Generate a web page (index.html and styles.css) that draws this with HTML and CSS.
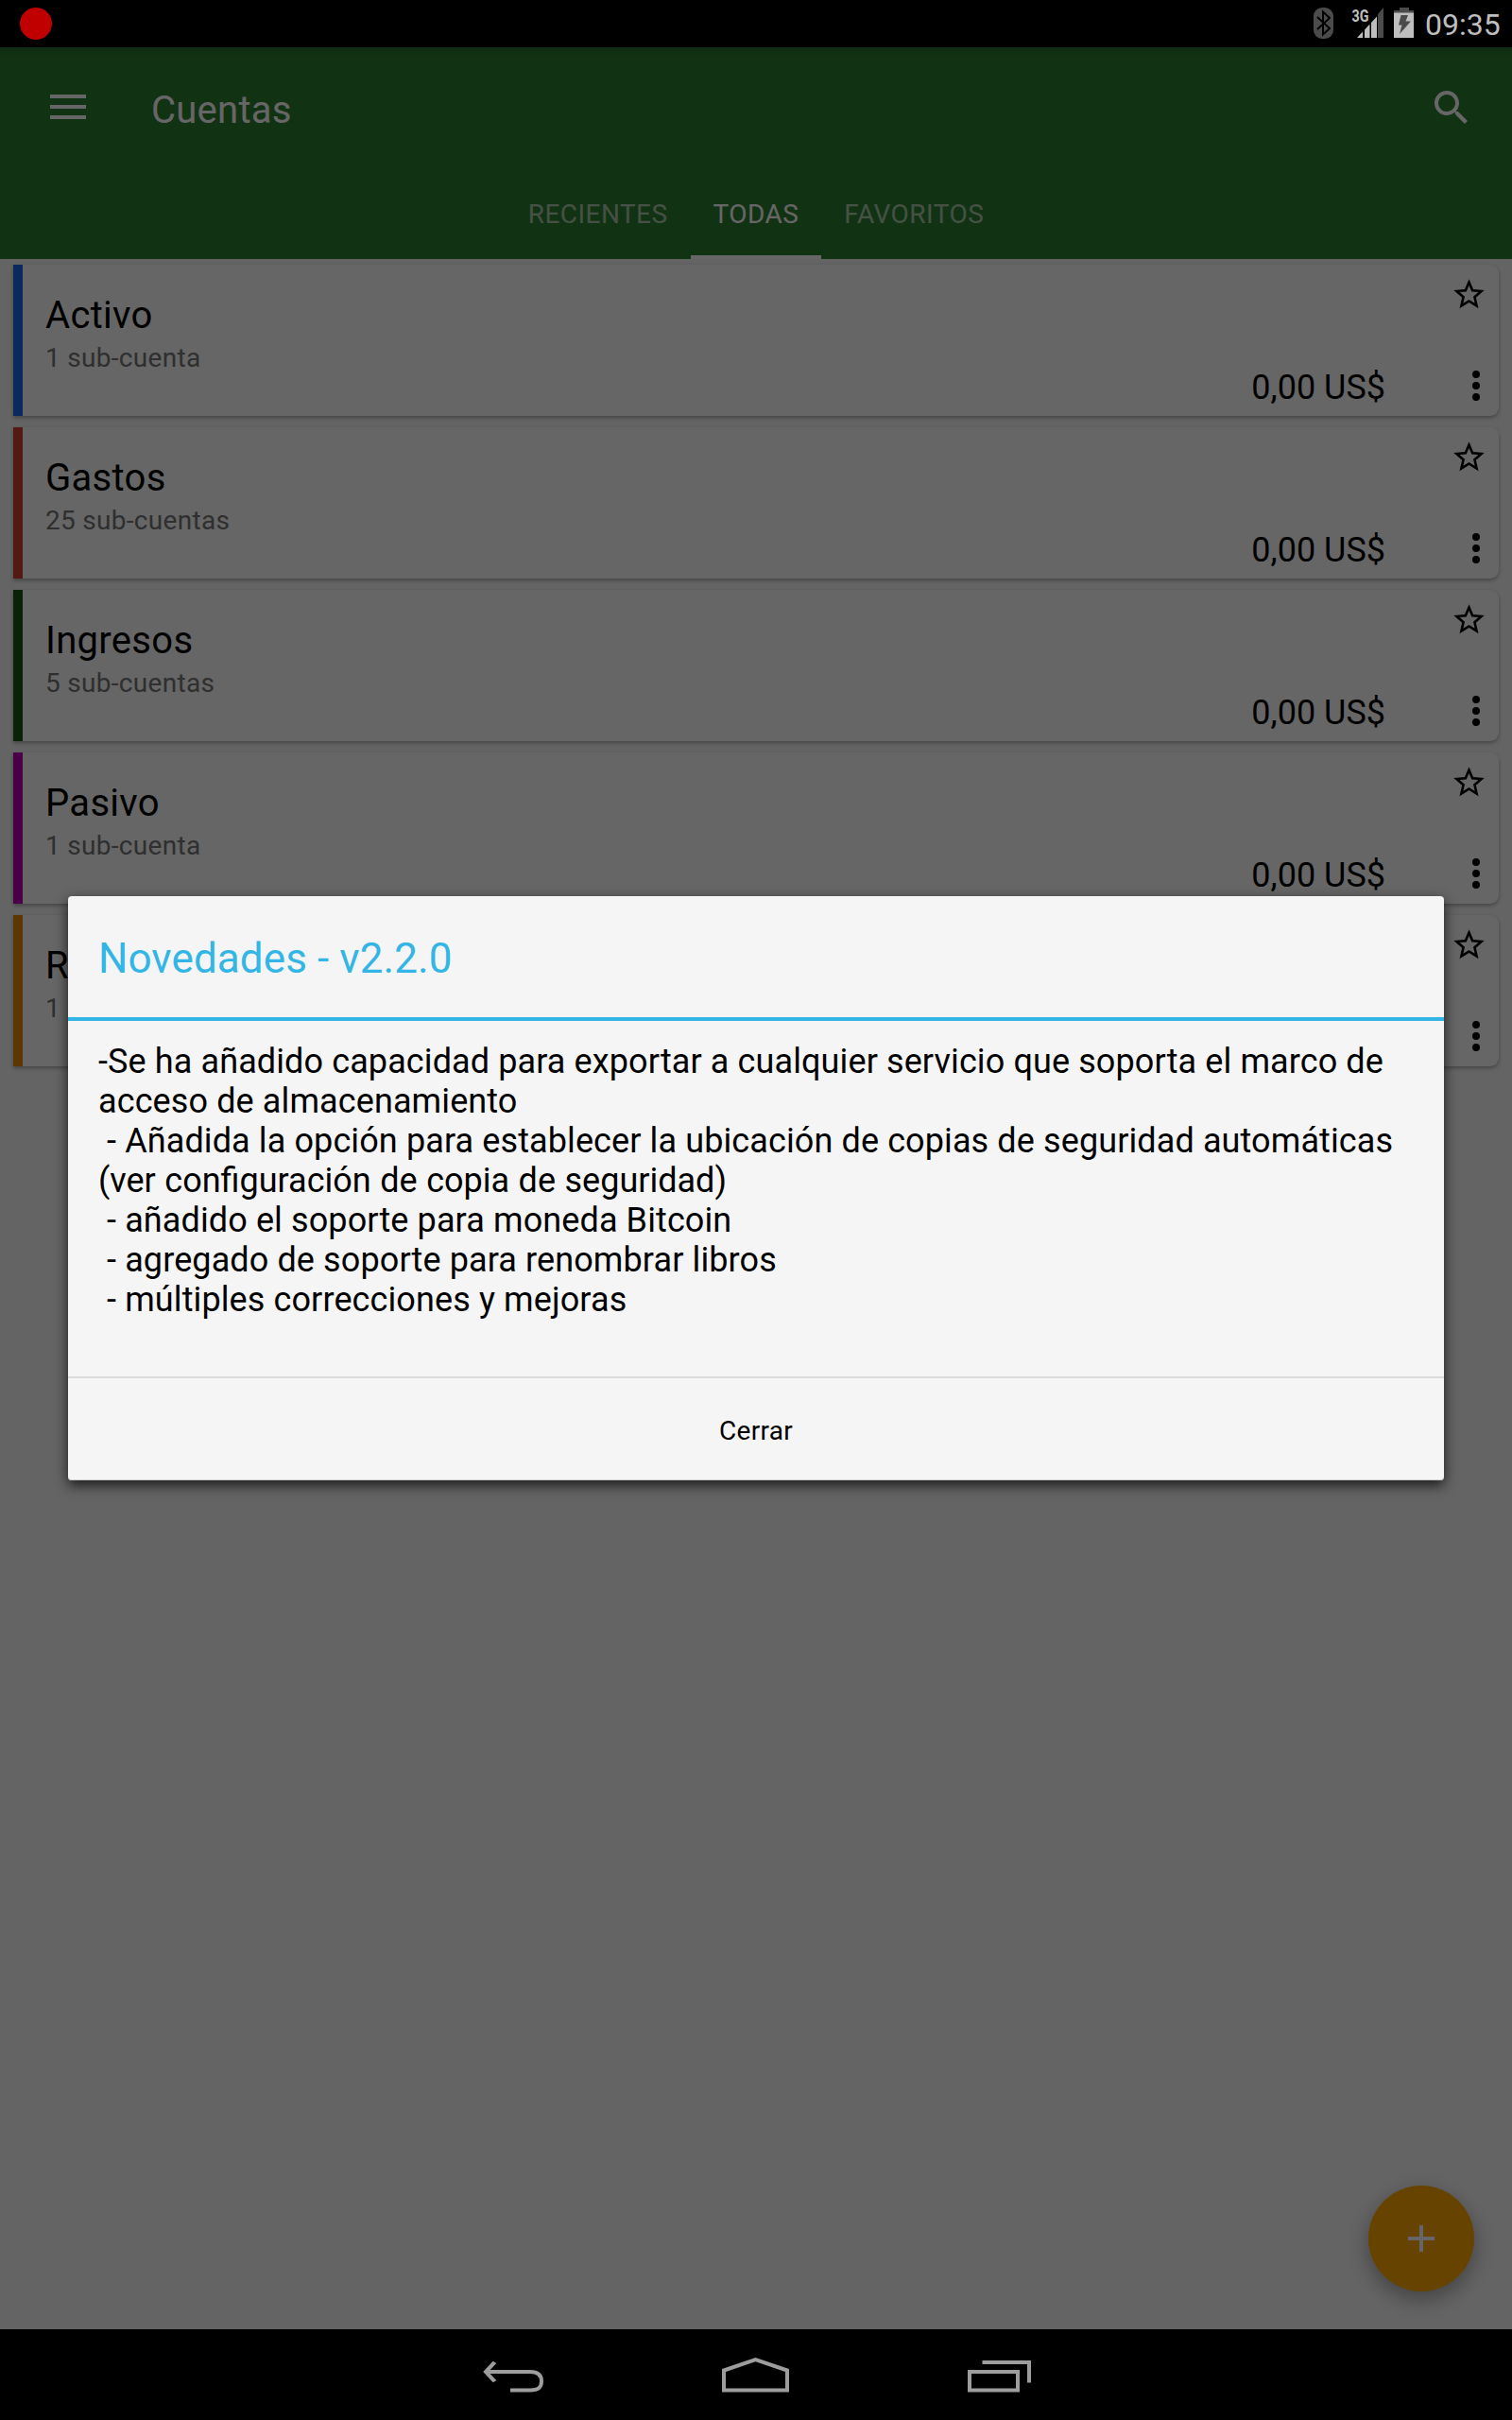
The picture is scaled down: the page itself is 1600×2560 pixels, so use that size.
FILE: index.html
```html
<!DOCTYPE html>
<html lang="es">
<head>
<meta charset="utf-8">
<title>Cuentas</title>
<link rel="stylesheet" href="styles.css">
</head>
<body>
<svg class="sprite" aria-hidden="true">
  <symbol id="star" viewBox="0 0 24 24"><path d="M22 9.24l-7.19-.62L12 2 9.19 8.63 2 9.24l5.46 4.73L5.82 21 12 17.27 18.18 21l-1.63-7.03L22 9.24zM12 15.4l-3.76 2.27 1-4.28-3.32-2.88 4.38-.38L12 6.1l1.71 4.04 4.38.38-3.32 2.88 1 4.28L12 15.4z"/></symbol>
  <symbol id="more" viewBox="0 0 8 32"><circle cx="4" cy="4" r="4"/><circle cx="4" cy="16" r="4"/><circle cx="4" cy="28" r="4"/></symbol>
</svg>
<div class="screen">
  <div class="status">
    <span class="rec"></span>
    <svg class="bt" width="21" height="33" viewBox="0 0 21 33"><rect width="21" height="33" rx="9" fill="#4b4b4b"/><path d="M4 10l13 12-7 6.500V4.500l7 6.500L4 23" fill="none" stroke="#000" stroke-width="2"/></svg>
    <svg class="signal" width="34" height="32" viewBox="0 0 34 32"><path d="M6 32L12 25.500V32zM14 32V23.500L19.500 17.500V32zM21 32V16L27 9.500V32z" fill="#bebebe"/><path d="M28 32V7L34 0V32z" fill="#4b4b4b"/><text x="0.500" y="15" textLength="18" lengthAdjust="spacingAndGlyphs" class="net">3G</text></svg>
    <svg class="battery" width="21" height="32" viewBox="0 0 21 32"><path d="M6 0h10v3h5v3H0V3h6z" fill="#4b4b4b"/><path d="M0 5.500h21V32H0z" fill="#bebebe"/><path d="M7.500 8H15l-2.500 6.500H18L6 28l2.500-9.500H5z" fill="#4b4b4b"/></svg>
    <span class="clock">09:35</span>
  </div>
  <div class="app">
    <header class="header">
      <div class="toolbar">
        <svg class="menu" width="38" height="26" viewBox="0 0 38 26"><path d="M0 0h38v4H0zM0 11h38v4H0zM0 22h38v4H0z" fill="#fff"/></svg>
        <h1 class="app-title">Cuentas</h1>
        <svg class="search" width="48" height="48" viewBox="0 0 24 24"><path fill="#fff" d="M15.500 14h-.79l-.28-.27C15.410 12.590 16 11.110 16 9.500 16 5.910 13.090 3 9.500 3S3 5.910 3 9.500 5.910 16 9.500 16c1.610 0 3.090-.59 4.230-1.570l.27.28v.79l5 4.990L20.490 19l-4.990-5zm-6 0C7.010 14 5 11.990 5 9.500S7.010 5 9.500 5 14 7.010 14 9.500 11.990 14 9.500 14z"/></svg>
      </div>
      <nav class="tabs">
        <span class="tab">RECIENTES</span>
        <span class="tab tab-active">TODAS</span>
        <span class="tab">FAVORITOS</span>
      </nav>
    </header>
    <main class="list">
      <article class="card blue"><div class="info"><h2>Activo</h2><p>1 sub-cuenta</p></div><span class="amount">0,00 US$</span><div class="actions"><svg class="star"><use href="#star"/></svg><svg class="more"><use href="#more"/></svg></div></article>
      <article class="card red"><div class="info"><h2>Gastos</h2><p>25 sub-cuentas</p></div><span class="amount">0,00 US$</span><div class="actions"><svg class="star"><use href="#star"/></svg><svg class="more"><use href="#more"/></svg></div></article>
      <article class="card green"><div class="info"><h2>Ingresos</h2><p>5 sub-cuentas</p></div><span class="amount">0,00 US$</span><div class="actions"><svg class="star"><use href="#star"/></svg><svg class="more"><use href="#more"/></svg></div></article>
      <article class="card purple"><div class="info"><h2>Pasivo</h2><p>1 sub-cuenta</p></div><span class="amount">0,00 US$</span><div class="actions"><svg class="star"><use href="#star"/></svg><svg class="more"><use href="#more"/></svg></div></article>
      <article class="card orange"><div class="info"><h2>R</h2><p>1</p></div><div class="actions"><svg class="star"><use href="#star"/></svg><svg class="more"><use href="#more"/></svg></div></article>
    </main>
    <div class="fab"><svg width="28" height="28" viewBox="0 0 28 28"><path d="M12 0h4v12h12v4H16v12h-4V16H0v-4h12z" fill="#fff"/></svg></div>
    <div class="scrim">
      <section class="dialog">
        <h2 class="dialog-title">Novedades - v2.2.0</h2>
        <div class="dialog-body">-Se ha añadido capacidad para exportar a cualquier servicio que soporta el marco de
acceso de almacenamiento
 - Añadida la opción para establecer la ubicación de copias de seguridad automáticas
<span class="ligated">(ver configuración de copia de seguridad)</span>
 - añadido el soporte para moneda Bitcoin
 - agregado de soporte para renombrar libros
 - múltiples correcciones y mejoras</div>
        <div class="dialog-button">Cerrar</div>
      </section>
    </div>
  </div>
  <nav class="navbar">
    <svg width="64" height="40" viewBox="0 0 64 40"><path d="M12.500 5L3 18l9.500 13" transform="translate(0 3) scale(1 .78)" fill="none" stroke="#9d9d9d" stroke-width="4.500"/><path d="M3 17H50C58 17 62 20 62 27S58 36.500 50 36.500H29" fill="none" stroke="#9d9d9d" stroke-width="4"/></svg>
    <svg width="71" height="40" viewBox="0 0 71 40"><path d="M2 36.500V15.500L35.500 4 69 15.500V36.500z" fill="none" stroke="#9d9d9d" stroke-width="4"/></svg>
    <svg width="67" height="40" viewBox="0 0 67 40"><path d="M2 17H53V36.500H2zM15.500 7H65V28.500" fill="none" stroke="#9d9d9d" stroke-width="4"/></svg>
  </nav>
</div>
</body>
</html>
```

FILE: styles.css
```css
* { box-sizing: border-box; }
body { margin: 0; background: #000; font-family: Roboto, "Noto Sans", sans-serif; color: #000; }
h1, h2, p { margin: 0; font-weight: 400; }
svg { display: block; flex: none; }
.sprite { position: absolute; width: 0; height: 0; }
.screen { width: 1600px; height: 2560px; display: flex; flex-direction: column; overflow: hidden; }

.status { height: 50px; background: #000; display: flex; align-items: flex-start; padding: 8px 12px 0 21px; color: #bebebe; }
.rec { width: 34px; height: 34px; border-radius: 50%; background: #c00000; margin-right: auto; }
.signal { margin-left: 19px; overflow: visible; }
.net { font: 700 18px Roboto, sans-serif; fill: #bebebe; }
.battery { margin-left: 11px; }
.clock { width: 80px; margin-left: 12px; font-size: 32px; line-height: 36px; }

.app { position: relative; flex: 1; background: #fafafa; display: flex; flex-direction: column; }
.header { height: 224px; background: linear-gradient(#297030, #2e7d32 12px); color: #fff; display: flex; flex-direction: column; }
.toolbar { height: 128px; display: flex; align-items: flex-start; padding: 40px 40px 0 53px; }
.menu { margin-top: 10px; }
.app-title { margin-left: 69px; flex: 1; font-size: 40px; line-height: 54px; letter-spacing: .25px; }
.tabs { flex: 1; display: flex; justify-content: center; font-size: 28px; letter-spacing: .45px; }
.tab { padding: 0 24px; line-height: 98px; height: 96px; color: rgba(255, 255, 255, .6); }
.tab-active { color: #fff; border-bottom: 4px solid #fff; }

.list { padding: 6px 14px; display: flex; flex-direction: column; gap: 12px; }
.card { height: 160px; background: #fff; border-left: 10px solid; border-radius: 0 9px 9px 0; display: flex; box-shadow: 0 2px 4px rgba(0, 0, 0, .32); }
.blue { border-color: #1969eb; }
.red { border-color: #cd412d; }
.green { border-color: #1a5519; }
.purple { border-color: #b900b2; }
.orange { border-color: #e88700; }
.info { flex: 1; padding: 31px 0 0 24px; }
.info h2 { color: #000; font-size: 40px; line-height: 46px; letter-spacing: .3px; }
.info p { color: #757575; font-size: 28px; line-height: 44px; letter-spacing: .3px; }
.amount { align-self: flex-end; color: #000; font-size: 36px; line-height: 42px; margin-bottom: 9px; }
.actions { width: 120px; padding: 12px 12px 0 0; display: flex; flex-direction: column; align-items: flex-end; }
.star { width: 39px; height: 39px; margin-right: .5px; fill: #000; }
.more { width: 8px; height: 32px; margin: 61px 8px 0 0; fill: #000; }

.fab { position: absolute; right: 40px; bottom: 40px; width: 112px; height: 112px; border-radius: 50%; background: #ffab00; display: flex; align-items: center; justify-content: center; box-shadow: 0 8px 22px rgba(0, 0, 0, .34); }
.scrim { position: absolute; inset: 0; background: rgba(0, 0, 0, .6); display: flex; align-items: center; justify-content: center; }
.dialog { width: 1456px; height: 618px; background: #f5f5f5; border-radius: 4px; box-shadow: 0 5px 14px rgba(0, 0, 0, .75), inset 0 -1px #ccc; display: flex; flex-direction: column; }
.dialog-title { height: 132px; padding: 0 32px; color: #33b5e5; border-bottom: 4px solid #33b5e5; font-size: 44px; line-height: 132px; letter-spacing: .1px; }
.dialog-body { flex: 1; padding: 22px 32px 0; font-size: 36px; line-height: 42px; letter-spacing: .11px; white-space: pre; }
.ligated { letter-spacing: 0; word-spacing: .6px; }
.dialog-button { height: 110px; border-top: 2px solid #dcdcdc; text-align: center; font-size: 28px; line-height: 112px; letter-spacing: .3px; }

.navbar { height: 96px; background: #000; display: flex; justify-content: center; gap: 189px; padding: 28px 0 0 2px; }
```
